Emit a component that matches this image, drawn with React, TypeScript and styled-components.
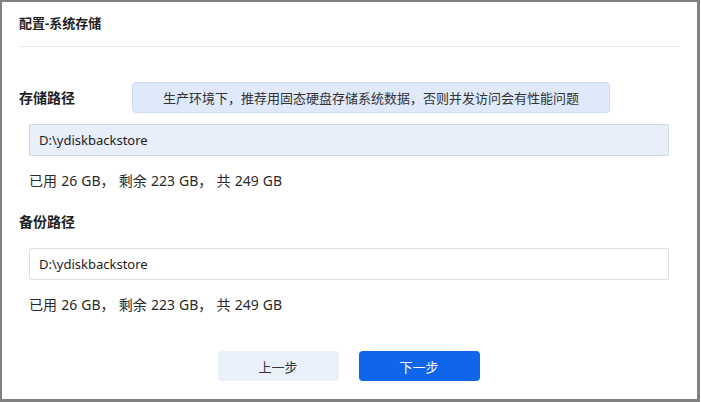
import styled, { createGlobalStyle } from 'styled-components'

const FONT = `"Noto Sans", "Noto Sans CJK SC", sans-serif`

const GlobalStyle = createGlobalStyle`
  html, body {
    margin: 0;
    padding: 0;
    background: #ffffff;
  }
  body {
    font-family: ${FONT};
    color: #222;
  }
`

interface IPathProps {
  label: string
  value: string
  used: string
  free: string
  total: string
  highlight?: boolean
  hint?: string
}

const PathSection = ({ label, value, used, free, total, highlight, hint }: IPathProps) => (
  <Section>
    <LabelRow>
      <Label>{label}</Label>
      {hint && <Hint>{hint}</Hint>}
    </LabelRow>
    <PathInput $highlight={highlight} readOnly value={value} />
    <Usage>
      已用 {used}， 剩余 {free}， 共 {total}
    </Usage>
  </Section>
)

const App = () => {
  return (
    <>
      <GlobalStyle />
      <Frame>
        <Header>
          <Title>配置-系统存储</Title>
        </Header>
        <Body>
          <PathSection
            label="存储路径"
            hint="生产环境下，推荐用固态硬盘存储系统数据，否则并发访问会有性能问题"
            value="D:\ydiskbackstore"
            used="26 GB"
            free="223 GB"
            total="249 GB"
            highlight
          />
          <PathSection
            label="备份路径"
            value="D:\ydiskbackstore"
            used="26 GB"
            free="223 GB"
            total="249 GB"
          />
        </Body>
        <Footer>
          <Button>上一步</Button>
          <Button $primary>下一步</Button>
        </Footer>
      </Frame>
    </>
  )
}

export default App

const Frame = styled.div`
  box-sizing: border-box;
  width: 700px;
  height: 402px;
  border-style: solid;
  border-color: #808080;
  border-width: 2px 3px 3px 2px;
  padding: 0 17px 0 17px;
  display: flex;
  flex-direction: column;
`

const Header = styled.div`
  padding: 11px 0 13px;
  border-bottom: 1px solid #e4e6ea;
`

const Title = styled.div`
  font-size: 13px;
  font-weight: 700;
  line-height: 20px;
  color: #1f1f1f;
`

const Body = styled.div`
  display: flex;
  flex-direction: column;
  gap: 21px;
  padding-top: 35px;
`

const Section = styled.div`
  display: flex;
  flex-direction: column;
`

const LabelRow = styled.div`
  display: flex;
  align-items: center;
  min-height: 20px;
`

const Label = styled.div`
  width: 113px;
  font-size: 14px;
  font-weight: 700;
  line-height: 20px;
  color: #1f1f1f;
`

const Hint = styled.div`
  box-sizing: border-box;
  width: 478px;
  height: 31px;
  display: flex;
  align-items: center;
  justify-content: center;
  background: #dfe9f9;
  border: 1px solid #c9dbf6;
  border-radius: 4px;
  font-size: 13px;
  color: #333;
`

const PathInput = styled.input<{ $highlight?: boolean }>`
  box-sizing: border-box;
  margin: ${({ $highlight }) => ($highlight ? '11px' : '16px')} 11px 0 10px;
  height: 32px;
  padding: 0 9px;
  border: 1px solid ${({ $highlight }) => ($highlight ? '#d5dce7' : '#dcdfe4')};
  border-radius: 2px;
  background: ${({ $highlight }) => ($highlight ? '#e8eefa' : '#ffffff')};
  font-family: ${FONT};
  font-size: 13px;
  color: #222;
  outline: none;
`

const Usage = styled.div`
  margin: 15px 0 0 10px;
  font-size: 14px;
  line-height: 20px;
  word-spacing: 0.5px;
  color: #2a2a2a;
`

const Footer = styled.div`
  display: flex;
  justify-content: center;
  gap: 20px;
  margin-top: 36px;
  padding-right: 2px;
`

const Button = styled.button<{ $primary?: boolean }>`
  width: 121px;
  height: 30px;
  border: none;
  border-radius: 4px;
  background: ${({ $primary }) => ($primary ? '#0f66ea' : '#e9f0fa')};
  color: ${({ $primary }) => ($primary ? '#ffffff' : '#333333')};
  font-family: ${FONT};
  font-size: 13px;
  cursor: pointer;
`
